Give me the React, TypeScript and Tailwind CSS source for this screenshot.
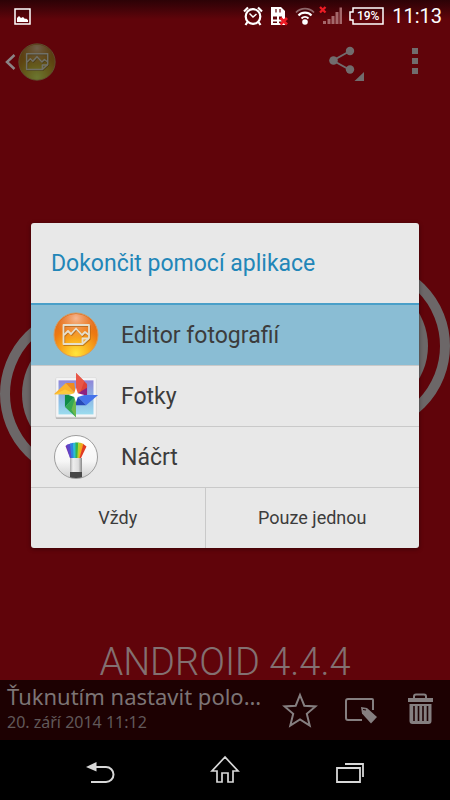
import type { ReactNode } from 'react';

function PhotoBadge({ id }: { id: string }) {
  return (
    <svg viewBox="0 0 46 46" className="w-full h-full" aria-hidden="true">
      <defs>
        <radialGradient id={`${id}-base`} cx="50%" cy="92%" r="85%">
          <stop offset="0" stopColor="#ffe53a" />
          <stop offset="0.35" stopColor="#fbb01e" />
          <stop offset="0.7" stopColor="#ee7a12" />
          <stop offset="1" stopColor="#e06a1c" />
        </radialGradient>
        <radialGradient id={`${id}-shine`} cx="50%" cy="10%" r="50%">
          <stop offset="0" stopColor="#f7c0a0" stopOpacity="0.9" />
          <stop offset="1" stopColor="#f7a060" stopOpacity="0" />
        </radialGradient>
      </defs>
      <circle cx="23" cy="23" r="22" fill={`url(#${id}-base)`} stroke="#d79a5c" strokeWidth="1" />
      <circle cx="23" cy="23" r="21" fill={`url(#${id}-shine)`} />
      <g fill="none" strokeLinejoin="round">
        <g stroke="#9c5a14" strokeWidth="2" opacity="0.6" transform="translate(0.7 0.9)">
          <path d="M10.500 13h25.500v13l-6.500 6h-19z" />
          <path d="M11 23l4-4 3 3 5-5.500 6 6.500 3-3 4 3" />
        </g>
        <g stroke="#e6dfcc" strokeWidth="1.800">
          <path d="M10.500 13h25.500v13l-6.500 6h-19z" />
          <path d="M11 23l4-4 3 3 5-5.500 6 6.500 3-3 4 3" />
          <path d="M29.500 32v-5.500h6.500" />
        </g>
      </g>
    </svg>
  );
}

function PhotosIcon() {
  return (
    <svg viewBox="0 0 48 50" className="w-full h-full" aria-hidden="true">
      <defs>
        <linearGradient id="sky" x1="0" y1="0" x2="0" y2="1">
          <stop offset="0" stopColor="#8f86d8" />
          <stop offset="0.5" stopColor="#8cb4e4" />
          <stop offset="1" stopColor="#9bdcee" />
        </linearGradient>
      </defs>
      <rect x="2" y="6" width="44" height="44" rx="1" fill="#b9b9b9" />
      <rect x="2" y="5" width="44" height="43" rx="1" fill="#f5f5f6" stroke="#cfcfcf" strokeWidth="0.500" />
      <rect x="5" y="8" width="38" height="37" fill="url(#sky)" />
      <path d="M24 24L36 13v12z" fill="#8d2281" />
      <path d="M24 0L36 12v4L24 23z" fill="#dd4337" />
      <path d="M24 0v23l5-3 4-11z" fill="#e95747" />
      <path d="M24 23H0L13 11z" fill="#fbb32c" />
      <path d="M13 11h9l2 12z" fill="#f08a1d" />
      <path d="M24 23L1 23l11-5z" fill="#fdc93d" />
      <path d="M24 24v24L12 37z" fill="#35a853" />
      <path d="M12 24h12L12 37z" fill="#0f8b46" />
      <path d="M24 24v24l-5-8z" fill="#6cb84f" />
      <path d="M24 24h24L35 35z" fill="#4573ea" />
      <path d="M24 24v11h11z" fill="#2749b8" />
      <path d="M24 16l2 6 7 2-7 2-2 6-2-6-6-2 6-2z" fill="#fff" />
    </svg>
  );
}

function SketchIcon() {
  return (
    <svg viewBox="0 0 46 46" className="w-full h-full" aria-hidden="true">
      <defs>
        <linearGradient id="disc" x1="0" y1="0" x2="0" y2="1">
          <stop offset="0" stopColor="#ffffff" />
          <stop offset="0.6" stopColor="#f6f6f6" />
          <stop offset="1" stopColor="#cfcfcf" />
        </linearGradient>
        <linearGradient id="handle" x1="0" y1="0" x2="1" y2="0">
          <stop offset="0" stopColor="#aaa" />
          <stop offset="0.25" stopColor="#eee" />
          <stop offset="0.7" stopColor="#ddd" />
          <stop offset="1" stopColor="#888" />
        </linearGradient>
        <clipPath id="disc-clip">
          <circle cx="23" cy="23" r="21" />
        </clipPath>
      </defs>
      <circle cx="23" cy="23" r="21.500" fill="url(#disc)" stroke="#9d9d9d" strokeWidth="1" />
      <g clipPath="url(#disc-clip)">
        <path d="M17 24l-4.500-12 3-2z" fill="#7a2fb0" />
        <path d="M17 24l-3.500-13 4-1.500 2.500 14.500z" fill="#5a48c8" />
        <path d="M18.500 24l-1.500-14.500 3.500-.7 1 15.200z" fill="#2f7fe0" />
        <path d="M20.500 24l-.5-15 3.200-.4v15.400z" fill="#2bbcd0" />
        <path d="M22.500 24v-15.500h3l-.5 15.500z" fill="#35b44a" />
        <path d="M24.300 24l.9-15.500 3.300.6-2.500 14.900z" fill="#b6cf2c" />
        <path d="M25.500 24l2.300-15 3 1-3.800 14z" fill="#f4a51c" />
        <path d="M26.500 24l3.800-14 3.200 2.500-5.500 11.500z" fill="#e03a22" />
        <rect x="17" y="24" width="12" height="15" fill="url(#handle)" />
        <rect x="17" y="38" width="12" height="8" fill="#484848" />
      </g>
    </svg>
  );
}

function StatusBar() {
  return (
    <div className="flex h-8 items-center bg-linear-to-b from-[#2c0206] to-[#60040a] to-60% pl-[14px] pr-2 text-white">
      <svg width="17" height="17" viewBox="0 0 17 17" aria-hidden="true">
        <rect x="1" y="1" width="15" height="15" fill="none" stroke="#fff" strokeWidth="1.500" />
        <path d="M3 14v-4l2-2 2 2 2-1 2 2 1-.5 2 1.500v2z" fill="#fff" />
      </svg>
      <div className="ml-auto flex items-center">
        <svg width="20" height="20" viewBox="0 0 20 20" fill="none" stroke="#fff" aria-label="Alarm">
          <circle cx="10" cy="10.500" r="7.300" strokeWidth="2.200" />
          <path d="M6.500 7.500l3.500 3.500 3.500-3" strokeWidth="1.500" />
          <path d="M1 5.500l4-4M19 5.500l-4-4M4.500 16l-2 3M15.500 16l2 3" strokeWidth="2.200" />
        </svg>
        <svg className="ml-[7px]" width="18" height="20" viewBox="0 0 18 20" aria-label="SIM">
          <path d="M1 1h10l4 4v14H1z" fill="#fff" />
          <path d="M3 10.500h4v3H3zM9 10.500h3v3H9zM3 15.500h4v1.500H3zM9 15.500h3v1.500H9z" fill="#62050a" />
          <path d="M6 3v3.500M10 3v3.500" stroke="#62050a" strokeWidth="1.200" />
          <path d="M10.500 12l6.500 6.500M17 12l-6.500 6.500" stroke="#ee1c25" strokeWidth="2.800" />
        </svg>
        <svg className="ml-[7px]" width="20" height="20" viewBox="0 0 20 20" fill="none" stroke="#fff" aria-label="Wi-Fi">
          <path d="M1 6.500a12.500 12.500 0 0 1 18 0" strokeWidth="1.800" opacity="0.4" />
          <path d="M3.500 9.500a9 9 0 0 1 13 0" strokeWidth="2.200" />
          <path d="M6.500 12.500a5 5 0 0 1 7 0" strokeWidth="2" />
          <circle cx="10" cy="16" r="2.800" fill="#fff" stroke="none" />
        </svg>
        <svg className="ml-1" width="24" height="20" viewBox="0 0 24 20" aria-label="Signal">
          <path d="M4 15h3v3H4zM8.500 13h3v5h-3zM12.500 10h3v8h-3zM16.500 6h3v12h-3zM20.500 1.500h2.500V18h-2.500z" fill="#a4676a" />
          <path d="M1 1l5.500 5.500M6.500 1L1 6.500" stroke="#ee1c25" strokeWidth="2.300" />
        </svg>
        <div className="relative ml-[6px] flex h-[18px] w-[35px] items-center justify-center">
          <svg className="absolute inset-0" width="35" height="18" viewBox="0 0 35 18" aria-hidden="true">
            <path d="M4 1h30v16H4v-4H1V5h3z" fill="none" stroke="#fff" strokeWidth="1.500" />
          </svg>
          <span className="relative pl-[3px] text-[12px] leading-[12px] font-medium">19%</span>
        </div>
        <span className="ml-2 text-[20px] leading-6">11:13</span>
      </div>
    </div>
  );
}

function ActionBar() {
  return (
    <div className="flex h-[60px] items-center pl-1 pr-4">
      <button aria-label="Zpět" className="flex items-center">
        <svg width="14" height="20" viewBox="0 0 14 20" fill="none" stroke="#8b8486" strokeWidth="2.500" aria-hidden="true">
          <path d="M10.500 3L3 10l7.500 7" />
        </svg>
        <span className="h-[38px] w-[38px] brightness-50 hue-rotate-15 saturate-75">
          <PhotoBadge id="bar" />
        </span>
      </button>
      <button aria-label="Sdílet" className="ml-auto">
        <svg width="38" height="38" viewBox="0 0 38 38" fill="#716c6d" aria-hidden="true">
          <path d="M22 8L5 17.500 22 27" fill="none" stroke="#716c6d" strokeWidth="2" />
          <circle cx="22" cy="8" r="4.200" />
          <circle cx="5.500" cy="17.500" r="4.300" />
          <circle cx="22" cy="26.500" r="4.200" />
          <path d="M36 29v9h-9.500z" />
        </svg>
      </button>
      <button aria-label="Další možnosti" className="ml-8 w-9 pl-2">
        <svg width="28" height="28" viewBox="0 0 28 28" fill="#716c6d" aria-hidden="true">
          <path d="M6 0h6v6H6zM6 10h6v6H6zM6 20h6v6H6z" />
        </svg>
      </button>
    </div>
  );
}

function Artwork() {
  return (
    <div className="flex flex-1 flex-col justify-between pt-[162px]">
      <svg viewBox="0 0 450 240" className="w-full" aria-hidden="true">
        <g fill="none" stroke="#6c6768" strokeWidth="10">
          <circle cx="87" cy="140" r="82" />
          <circle cx="363" cy="92" r="82" />
        </g>
        <circle cx="87" cy="140" r="65" fill="#6c6768" />
        <circle cx="363" cy="92" r="65" fill="#6c6768" />
      </svg>
      <p className="text-center text-[38px] leading-9 font-light text-[#837071]">ANDROID 4.4.4</p>
    </div>
  );
}

function PhotoInfo() {
  return (
    <div className="flex h-[60px] items-center bg-[#1d0102] pl-[7px] pr-3">
      <div className="min-w-0 flex-1 pb-1 font-['Noto_Sans',sans-serif]">
        <p className="text-[22px] leading-7 whitespace-nowrap text-[#7c7475]">Ťuknutím nastavit polo…</p>
        <p className="text-[16px] leading-6 text-[#61595a]">20. září 2014 11:12</p>
      </div>
      <div className="flex items-center gap-6">
        <button aria-label="Oblíbené">
          <svg width="36" height="36" viewBox="0 0 36 36" fill="none" stroke="#857f80" strokeWidth="2" aria-hidden="true">
            <path d="M18 3l4.300 10.700 11.200.7-8.700 7.400 2.900 11.700L18 27.500l-9.700 6 2.900-11.700-8.700-7.400 11.200-.7z" />
          </svg>
        </button>
        <button aria-label="Upravit">
          <svg width="36" height="36" viewBox="0 0 36 36" fill="none" aria-hidden="true">
            <path d="M20 28H6a2 2 0 0 1-2-2V9a2 2 0 0 1 2-2h24a1 1 0 0 1 1 1v10" stroke="#857f80" strokeWidth="2" />
            <path d="M19 15l6 1 10 9-6 6.500L20 21.500z" fill="#857f80" />
            <path d="M21 17.500l3 .5" stroke="#1d0102" strokeWidth="1.200" />
          </svg>
        </button>
        <button aria-label="Odstranit">
          <svg width="36" height="36" viewBox="0 0 36 36" aria-hidden="true">
            <path d="M12 7V4.500a2 2 0 0 1 2-2h8a2 2 0 0 1 2 2V7" fill="none" stroke="#857f80" strokeWidth="2" />
            <path d="M6 6h25v4H6z" fill="#857f80" />
            <path d="M7.500 12h22v17a3 3 0 0 1-3 3h-16a3 3 0 0 1-3-3z" fill="#857f80" />
            <path d="M12 14v15M16.500 14v15M21 14v15M25.500 14v15" stroke="#1d0102" strokeWidth="1.600" />
          </svg>
        </button>
      </div>
    </div>
  );
}

function NavBar() {
  return (
    <nav className="flex h-[60px] items-center justify-center gap-[90px] bg-black">
      <button aria-label="Zpět">
        <svg width="34" height="32" viewBox="0 0 34 32" fill="none" aria-hidden="true">
          <path d="M12 13h11a7 7 0 0 1 0 15H8" stroke="#d8d8d8" strokeWidth="2" transform="translate(-1 0)" />
          <path d="M2 13l10.500-5v9.500z" fill="#d8d8d8" />
        </svg>
      </button>
      <button aria-label="Domů">
        <svg width="34" height="32" viewBox="0 0 34 32" fill="none" stroke="#d8d8d8" strokeWidth="1.700" aria-hidden="true">
          <path d="M17 3L4 17h5v11h5v-9h6v9h5V17h5z" />
        </svg>
      </button>
      <button aria-label="Poslední aplikace">
        <svg width="34" height="32" viewBox="0 0 34 32" fill="none" stroke="#d8d8d8" strokeWidth="1.800" aria-hidden="true">
          <path d="M5 14h23v14H5zM13 10h18v13" />
        </svg>
      </button>
    </nav>
  );
}

const apps: { label: string; icon: ReactNode; selected?: boolean }[] = [
  { label: 'Editor fotografií', icon: <PhotoBadge id="editor" />, selected: true },
  { label: 'Fotky', icon: <PhotosIcon /> },
  { label: 'Náčrt', icon: <SketchIcon /> },
];

function AppChooser() {
  return (
    <div className="absolute inset-x-0 top-8 bottom-[62px] flex items-center px-[31px]">
      <div
        role="dialog"
        aria-labelledby="chooser-title"
        className="w-full overflow-hidden rounded-[3px] bg-[#e8e8e8] text-[#3c3c3c] shadow-[0_1px_4px_rgba(0,0,0,0.4)]"
      >
        <h1 id="chooser-title" className="border-b-2 border-[#4a9fc8] px-5 pt-[25px] pb-[23px] text-[23px] leading-8 text-[#2286b8]">
          Dokončit pomocí aplikace
        </h1>
        <ul>
          {apps.map((app) => (
            <li key={app.label} className="border-b border-[#c9c9c9]">
              <button className={`flex h-[60px] w-full items-center px-[22px] text-left ${app.selected ? 'bg-[#8abdd4]' : ''}`}>
                <span className="h-[46px] w-[46px] shrink-0">{app.icon}</span>
                <span className="ml-[22px] pt-[2px] text-[23px] leading-8">{app.label}</span>
              </button>
            </li>
          ))}
        </ul>
        <div className="grid grid-cols-[9fr_11fr] text-[18px] leading-6">
          <button className="h-[60px] border-r border-[#c9c9c9]">Vždy</button>
          <button className="h-[60px]">Pouze jednou</button>
        </div>
      </div>
    </div>
  );
}

export default function App() {
  return (
    <div className="relative flex min-h-screen flex-col overflow-hidden bg-[#60040a] font-[Roboto,sans-serif]">
      <StatusBar />
      <ActionBar />
      <Artwork />
      <PhotoInfo />
      <NavBar />
      <AppChooser />
    </div>
  );
}
